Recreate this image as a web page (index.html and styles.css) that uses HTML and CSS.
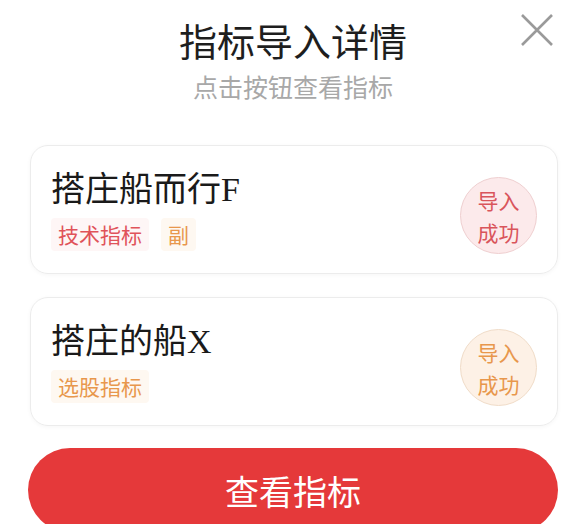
FILE: index.html
```html
<!DOCTYPE html>
<html lang="zh-CN">
<head>
    <meta charset="UTF-8">
    <meta name="viewport" content="width=device-width, initial-scale=1.0">
    <title>指标导入详情</title>
    <link rel="stylesheet" href="styles.css">
</head>
<body>
    <div id="sheet">
        <div class="header">
            <h1 class="title">指标导入详情</h1>
            <p class="subtitle">点击按钮查看指标</p>
            <a class="close" href="#">
                <svg width="34" height="34" viewBox="0 0 34 34">
                    <path d="M2 2 L32 32 M32 2 L2 32" stroke="#9a9a9a" stroke-width="2.6" fill="none"/>
                </svg>
            </a>
        </div>

        <div class="list">
            <div class="card">
                <div class="card-info">
                    <div class="card-name">搭庄船而行F</div>
                    <div class="tags">
                        <span class="tag tag-red">技术指标</span>
                        <span class="tag tag-orange">副</span>
                    </div>
                </div>
                <div class="badge badge-red">导入<br>成功</div>
            </div>

            <div class="card">
                <div class="card-info">
                    <div class="card-name">搭庄的船X</div>
                    <div class="tags">
                        <span class="tag tag-orange">选股指标</span>
                    </div>
                </div>
                <div class="badge badge-orange">导入<br>成功</div>
            </div>
        </div>

        <button class="btn-view">查看指标</button>
    </div>
</body>
</html>
```

FILE: styles.css
```css
body {
    margin: 0;
    padding: 0;
    background-color: #fff;
}

* {
    font-family: "Noto Sans CJK SC", "Noto Sans", sans-serif;
    box-sizing: border-box;
}

#sheet {
    padding: 0 28px;
    height: 524px;
    overflow: hidden;
}

.header {
    position: relative;
    padding-top: 15px;
    text-align: center;
}

.header .title {
    margin: 0;
    font-size: 38px;
    line-height: 49px;
    font-weight: normal;
    color: #1e1e1e;
}

.header .subtitle {
    margin: 6px 0 0;
    font-size: 25px;
    line-height: 32px;
    color: #a8a8a8;
}

.header .close {
    position: absolute;
    top: 13px;
    right: 4px;
    display: block;
    width: 34px;
    height: 34px;
}

.list {
    margin-top: 43px;
    margin-left: 2px;
    display: flex;
    flex-direction: column;
    gap: 23px;
}

.card {
    display: flex;
    align-items: center;
    justify-content: space-between;
    height: 129px;
    padding: 0 20px 0 20px;
    border: 1px solid #ececec;
    border-radius: 18px;
    box-shadow: 0 1px 4px rgba(0, 0, 0, 0.04);
}

.card-name {
    font-family: "Liberation Serif", "Noto Sans CJK SC", serif;
    font-size: 34px;
    line-height: 42px;
    color: #1a1a1a;
}

.tags {
    display: flex;
    gap: 12px;
    margin-top: 7px;
}

.tag {
    font-size: 21px;
    line-height: 33px;
    padding: 0 7px;
    border-radius: 4px;
}

.tag-red {
    color: #e0535a;
    background-color: #fef6f6;
}

.tag-orange {
    color: #e8974c;
    background-color: #fef8f1;
}

.badge {
    width: 77px;
    height: 77px;
    margin-top: 12px;
    border-radius: 50%;
    display: flex;
    align-items: center;
    justify-content: center;
    text-align: center;
    font-size: 21px;
    line-height: 32px;
}

.badge-red {
    color: #d9555b;
    background-color: #fceaeb;
    border: 1px solid #efcfd0;
}

.badge-orange {
    color: #e8974c;
    background-color: #fdf1e6;
    border: 1px solid #f0dcc8;
}

.btn-view {
    display: block;
    width: 100%;
    height: 84px;
    margin-top: 22px;
    border: none;
    border-radius: 42px;
    background-color: #e5393a;
    color: #fff;
    font-size: 34px;
    cursor: pointer;
}
```
